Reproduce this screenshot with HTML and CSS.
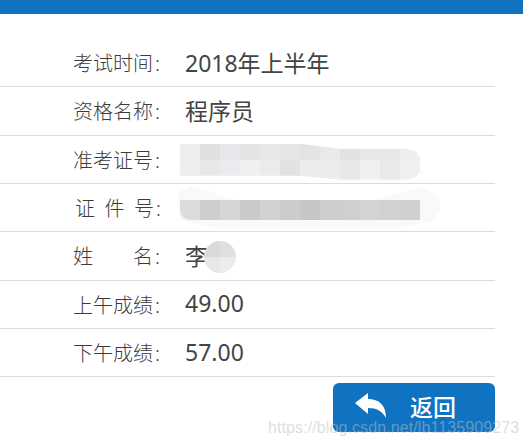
FILE: index.html
```html
<!DOCTYPE html>
<html lang="zh">
<head>
<meta charset="utf-8">
<title>成绩查询</title>
<link rel="stylesheet" href="styles.css">
</head>
<body>
<div class="topbar"></div>
<main class="panel">
  <div class="row"><span class="label">考试时间<span class="colon">:</span></span><span class="value">2018年上半年</span></div>
  <div class="row"><span class="label">资格名称<span class="colon">:</span></span><span class="value">程序员</span></div>
  <div class="row"><span class="label">准考证号<span class="colon">:</span></span><span class="value"></span><div class="blur blur-ticket"></div></div>
  <div class="row"><span class="label label-id">证 件 号<span class="colon">:</span></span><span class="value"></span><div class="blur-halo"></div><div class="blur blur-id"></div></div>
  <div class="row"><span class="label">姓　　名<span class="colon">:</span></span><span class="value">李</span><div class="blur-name"></div></div>
  <div class="row"><span class="label">上午成绩<span class="colon">:</span></span><span class="value">49.00</span></div>
  <div class="row"><span class="label">下午成绩<span class="colon">:</span></span><span class="value">57.00</span></div>
  <div class="actions">
    <button class="back" type="button">
      <svg class="back-icon" viewBox="0 0 32 26" width="32" height="26" aria-hidden="true"><path d="M0 10 L13 0 V6 C24 6 31 12 31 25 C27 18 22 15 13 15 V21 Z" fill="#fff"/></svg>
      <span>返回</span>
    </button>
  </div>
</main>
<div class="watermark">https://blog.csdn.net/lb1135909273</div>
</body>
</html>
```
FILE: styles.css
```css
* { box-sizing: border-box; }
html, body { margin: 0; padding: 0; height: 100%; overflow: hidden; background: #fff; }
body { position: relative; font-family: "Noto Sans", "Noto Sans CJK SC", sans-serif; color: #444; }
.topbar { height: 14px; background: #0f73c2; }
.panel { width: 495px; padding-top: 25px; }
.row {
  position: relative;
  display: flex;
  align-items: center;
  height: 48.33px;
  border-bottom: 1px solid #dcdcdc;
}
.label {
  width: 162px;
  flex: none;
  padding-left: 73px;
  font-size: 20px;
  font-weight: 300;
  white-space: pre;
  color: #3c3c3c;
}
.colon { margin-left: 2px; }
.label-id { padding-left: 75px; word-spacing: 4.3px; }
.value { margin-left: 23px; padding-bottom: 2px; font-size: 23px; font-weight: 400; color: #444; }
.blur { position: absolute; left: 180px; width: 240px; }
.blur-ticket {
  top: 8px;
  height: 36px;
  clip-path: polygon(0 0, 120px 0, 160px 5px, 228px 5px, 236px 8px, 240px 14px, 240px 28px, 236px 33px, 228px 36px, 160px 36px, 120px 32px, 0 32px);
  background:
    linear-gradient(90deg, #eeedec 0 20px, #e1e0df 20px 40px, #e5e7ea 40px 60px, #e4e4e4 60px 80px, #e8e8e7 80px 100px, #e6e6e7 100px 120px, #e3e3e3 120px 140px, #e9e9e9 140px 160px, #e2e2e2 160px 180px, #e8e8e8 180px 200px, #e6e7e7 200px 220px, #eeeeee 220px 240px) top / 100% 16px no-repeat,
    linear-gradient(90deg, #eeeeee 0 20px, #e8e7e6 20px 40px, #eaebee 40px 60px, #f0f0ef 60px 80px, #ebebea 80px 100px, #e2e2e2 100px 120px, #ececec 120px 140px, #ececec 140px 160px, #e7e8e8 160px 180px, #f0f0f0 180px 200px, #e9e9e9 200px 220px, #efefef 220px 240px) bottom / 100% 20px no-repeat;
}
.blur-halo {
  position: absolute;
  left: 176px;
  top: 0;
  width: 264px;
  height: 45px;
  clip-path: polygon(2px 8px, 16px 2px, 60px 16px, 200px 16px, 244px 3px, 256px 8px, 264px 18px, 264px 28px, 256px 37px, 220px 44px, 40px 44px, 4px 36px);
  background: #f9f9fa;
}
.blur-id {
  top: 16px;
  height: 20px;
  border-radius: 0 0 0 10px;
  background: linear-gradient(90deg, #dcdcdb 0 20px, #cdcdcd 20px 40px, #d6d5d3 40px 60px, #cacaca 60px 80px, #d2d2d4 80px 100px, #cbcdcc 100px 120px, #c8c6c4 120px 140px, #cdcecd 140px 160px, #cfcfce 160px 180px, #d2d3d2 180px 200px, #d3d1cf 200px 220px, #cfd0cf 220px 240px);
}
.blur-name {
  position: absolute;
  left: 204px;
  top: 9px;
  width: 32px;
  height: 32px;
  border-radius: 50%;
  background:
    linear-gradient(90deg, #d8d9d9 0 50%, #dfdfdf 50% 100%) top / 100% 50% no-repeat,
    linear-gradient(90deg, #e7e7e7 0 50%, #ececec 50% 100%) bottom / 100% 50% no-repeat;
}
.actions { display: flex; justify-content: flex-end; padding-top: 6px; }
.back {
  display: flex;
  align-items: center;
  width: 162px;
  height: 49px;
  padding: 0 0 3px 22px;
  border: 0;
  border-radius: 6px;
  background: #0f73c2;
  color: #fff;
  font-family: "Noto Sans CJK SC", sans-serif;
  font-size: 23px;
  font-weight: 500;
}
.back-icon { margin-right: 23px; }
.watermark {
  position: absolute;
  left: 268px;
  top: 419px;
  font-family: "Liberation Sans", sans-serif;
  font-size: 16px;
  letter-spacing: .1px;
  color: rgba(190, 190, 190, .5);
}
```
